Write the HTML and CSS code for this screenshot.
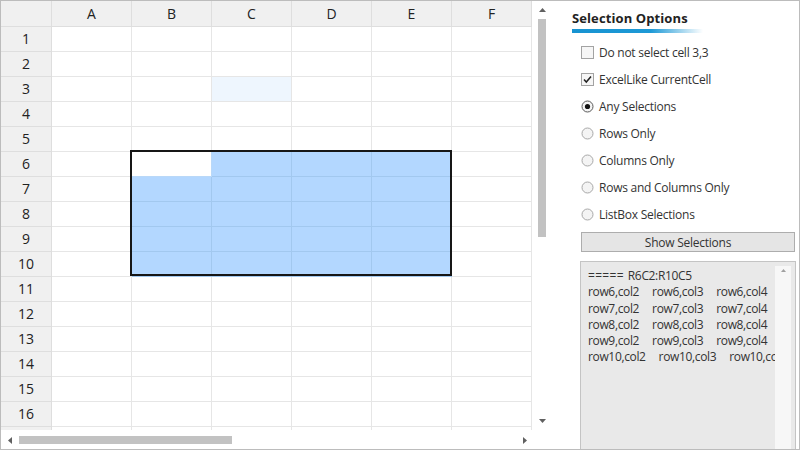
FILE: index.html
```html
<!DOCTYPE html>
<html>
<head>
<meta charset="utf-8">
<link rel="stylesheet" href="styles.css">
</head>
<body>
<div class="window">
  <div class="sheet-area">
    <div class="sheet-row">
      <div class="sheet">
        <div class="grid">
          <div class="h"></div><div class="h">A</div><div class="h">B</div><div class="h">C</div><div class="h">D</div><div class="h">E</div><div class="h">F</div>
          <div class="h">1</div><div class="c"></div><div class="c"></div><div class="c"></div><div class="c"></div><div class="c"></div><div class="c"></div>
          <div class="h">2</div><div class="c"></div><div class="c"></div><div class="c"></div><div class="c"></div><div class="c"></div><div class="c"></div>
          <div class="h">3</div><div class="c"></div><div class="c"></div><div class="c hint"></div><div class="c"></div><div class="c"></div><div class="c"></div>
          <div class="h">4</div><div class="c"></div><div class="c"></div><div class="c"></div><div class="c"></div><div class="c"></div><div class="c"></div>
          <div class="h">5</div><div class="c"></div><div class="c"></div><div class="c"></div><div class="c"></div><div class="c"></div><div class="c"></div>
          <div class="h">6</div><div class="c"></div><div class="c cur"></div><div class="c sel"></div><div class="c sel"></div><div class="c sel"></div><div class="c"></div>
          <div class="h">7</div><div class="c"></div><div class="c sel"></div><div class="c sel"></div><div class="c sel"></div><div class="c sel"></div><div class="c"></div>
          <div class="h">8</div><div class="c"></div><div class="c sel"></div><div class="c sel"></div><div class="c sel"></div><div class="c sel"></div><div class="c"></div>
          <div class="h">9</div><div class="c"></div><div class="c sel"></div><div class="c sel"></div><div class="c sel"></div><div class="c sel"></div><div class="c"></div>
          <div class="h">10</div><div class="c"></div><div class="c sel"></div><div class="c sel"></div><div class="c sel"></div><div class="c sel"></div><div class="c"></div>
          <div class="h">11</div><div class="c"></div><div class="c"></div><div class="c"></div><div class="c"></div><div class="c"></div><div class="c"></div>
          <div class="h">12</div><div class="c"></div><div class="c"></div><div class="c"></div><div class="c"></div><div class="c"></div><div class="c"></div>
          <div class="h">13</div><div class="c"></div><div class="c"></div><div class="c"></div><div class="c"></div><div class="c"></div><div class="c"></div>
          <div class="h">14</div><div class="c"></div><div class="c"></div><div class="c"></div><div class="c"></div><div class="c"></div><div class="c"></div>
          <div class="h">15</div><div class="c"></div><div class="c"></div><div class="c"></div><div class="c"></div><div class="c"></div><div class="c"></div>
          <div class="h">16</div><div class="c"></div><div class="c"></div><div class="c"></div><div class="c"></div><div class="c"></div><div class="c"></div>
          <div class="h"></div><div class="c"></div><div class="c"></div><div class="c"></div><div class="c"></div><div class="c"></div><div class="c"></div>
        </div>
        <div class="sel-box"></div>
      </div>
      <div class="vscroll">
        <div class="arrow-box"><svg width="7" height="4" viewBox="0 0 7 4"><path d="M0 4 L3.5 0 L7 4 Z" fill="#606060"/></svg></div>
        <div class="vthumb"></div>
        <div class="spacer"></div>
        <div class="arrow-box"><svg width="7" height="4" viewBox="0 0 7 4"><path d="M0 0 L3.5 4 L7 0 Z" fill="#606060"/></svg></div>
      </div>
    </div>
    <div class="hscroll-row">
      <div class="hscroll">
        <div class="harrow"><svg width="4" height="7" viewBox="0 0 4 7"><path d="M4 0 L0 3.5 L4 7 Z" fill="#606060"/></svg></div>
        <div class="hthumb"></div>
        <div class="spacer"></div>
        <div class="harrow right"><svg width="4" height="7" viewBox="0 0 4 7"><path d="M0 0 L4 3.5 L0 7 Z" fill="#606060"/></svg></div>
      </div>
      <div class="corner"></div>
    </div>
  </div>

  <div class="panel">
    <div class="title">Selection Options</div>
    <div class="title-bar"></div>
    <div class="options">
      <div class="opt"><span class="check"></span><span>Do not select cell 3,3</span></div>
      <div class="opt"><span class="check"><svg width="11" height="11" viewBox="0 0 11 11"><path d="M2 5.5 L4.3 8 L9 2.5" fill="none" stroke="#222" stroke-width="1.5"/></svg></span><span>ExcelLike CurrentCell</span></div>
      <div class="opt"><svg class="radio" width="13" height="13" viewBox="0 0 13 13"><circle cx="6.5" cy="6.5" r="5.5" fill="#f4f4f4" stroke="#5a5a5a"/><circle cx="6.5" cy="6.5" r="2.6" fill="#111"/></svg><span>Any Selections</span></div>
      <div class="opt"><svg class="radio" width="13" height="13" viewBox="0 0 13 13"><circle cx="6.5" cy="6.5" r="5.5" fill="#f4f4f4" stroke="#a8a8a8"/></svg><span>Rows Only</span></div>
      <div class="opt"><svg class="radio" width="13" height="13" viewBox="0 0 13 13"><circle cx="6.5" cy="6.5" r="5.5" fill="#f4f4f4" stroke="#a8a8a8"/></svg><span>Columns Only</span></div>
      <div class="opt"><svg class="radio" width="13" height="13" viewBox="0 0 13 13"><circle cx="6.5" cy="6.5" r="5.5" fill="#f4f4f4" stroke="#a8a8a8"/></svg><span>Rows and Columns Only</span></div>
      <div class="opt"><svg class="radio" width="13" height="13" viewBox="0 0 13 13"><circle cx="6.5" cy="6.5" r="5.5" fill="#f4f4f4" stroke="#a8a8a8"/></svg><span>ListBox Selections</span></div>
    </div>
    <div class="button">Show Selections</div>
    <div class="listbox">
      <div class="list-content">
        <div class="line"><span class="eq">=====</span> R6C2:R10C5</div>
        <div class="line"><span>row6,col2</span><span>row6,col3</span><span>row6,col4</span></div>
        <div class="line"><span>row7,col2</span><span>row7,col3</span><span>row7,col4</span></div>
        <div class="line"><span>row8,col2</span><span>row8,col3</span><span>row8,col4</span></div>
        <div class="line"><span>row9,col2</span><span>row9,col3</span><span>row9,col4</span></div>
        <div class="line"><span>row10,col2</span><span>row10,col3</span><span>row10,col4</span></div>
      </div>
      <div class="list-scroll">
        <svg width="5" height="3" viewBox="0 0 5 3"><path d="M0 3 L2.5 0 L5 3 Z" fill="#a0a0a0"/></svg>
      </div>
    </div>
  </div>
</div>
</body>
</html>
```
FILE: styles.css
```css
* { box-sizing: border-box; }
html, body { margin: 0; padding: 0; background: #fff; }
body { font-family: "Open Sans", "Noto Sans", sans-serif; color: #333; }

.window {
  width: 800px;
  height: 450px;
  border: 1px solid #bcbcbc;
  display: flex;
  overflow: hidden;
}

.sheet-area {
  width: 548px;
  display: flex;
  flex-direction: column;
}
.sheet-row { height: 429px; display: flex; }
.sheet {
  width: 531px;
  height: 429px;
  overflow: hidden;
  position: relative;
}
.grid {
  display: grid;
  grid-template-columns: 51px repeat(6, 80px);
  grid-template-rows: 26px repeat(17, 25px);
}
.h {
  background: #f0f0f0;
  border-right: 1px solid #dedede;
  border-bottom: 1px solid #dedede;
  font-size: 14px;
  color: #222;
  display: flex;
  align-items: center;
  justify-content: center;
  line-height: 1;
}
.c {
  border-right: 1px solid #e6e6e6;
  border-bottom: 1px solid #e6e6e6;
}
.c.sel { background: #b3d7ff; border-color: #a2c8ef; }
.c.cur { background: #fff; border-color: #b9d8f8; }
.c.hint { background: #eef6fe; }
.sel-box {
  position: absolute;
  left: 129px;
  top: 149px;
  width: 322px;
  height: 126px;
  border: 2px solid #161616;
}

.vscroll {
  width: 17px;
  display: flex;
  flex-direction: column;
  padding-left: 6px;
}
.arrow-box {
  height: 18px;
  width: 8px;
  display: flex;
  align-items: center;
  justify-content: center;
}
.vthumb { width: 8px; height: 218px; background: #c2c2c2; }
.spacer { flex: 1; }

.hscroll-row { height: 19px; display: flex; }
.hscroll {
  width: 531px;
  display: flex;
  align-items: center;
  padding-top: 1px;
}
.harrow {
  width: 18px;
  height: 8px;
  display: flex;
  align-items: center;
  justify-content: center;
}
.harrow.right { width: 14px; }
.hthumb { width: 213px; height: 8px; background: #c2c2c2; }
.corner { flex: 1; }

.panel {
  flex: 1;
  display: flex;
  flex-direction: column;
  padding-left: 23px;
}
.title {
  margin-top: 8px;
  font-size: 13px;
  font-weight: 700;
  line-height: 18px;
  color: #222;
  letter-spacing: 0.1px;
}
.title-bar {
  margin-top: 2px;
  width: 131px;
  height: 4px;
  background: linear-gradient(to right, #1793d1 0%, #1d99d6 60%, #ffffff 100%);
}
.options { margin-top: 6px; padding-left: 9px; }
.opt {
  height: 27px;
  display: flex;
  align-items: center;
  font-size: 12px;
  letter-spacing: -0.25px;
  color: #333;
}
.check {
  width: 13px;
  height: 13px;
  border: 1px solid #a3a3a3;
  background: #f6f6f6;
  margin-right: 5px;
  display: flex;
  align-items: center;
  justify-content: center;
}
.radio { margin-right: 5px; flex: none; }
.button {
  margin: 4px 0 0 9px;
  width: 214px;
  height: 20px;
  background: #e5e5e5;
  border: 1px solid #adadad;
  font-size: 12px;
  letter-spacing: -0.25px;
  color: #333;
  display: flex;
  align-items: center;
  justify-content: center;
}
.listbox {
  margin: 9px 0 0 8px;
  width: 216px;
  flex: 1;
  border: 1px solid #c4c4c4;
  border-bottom: none;
  background: #e9e9e9;
  display: flex;
}
.list-content {
  flex: 1;
  overflow: hidden;
  padding: 6px 0 0 7px;
  font-size: 12px;
  letter-spacing: -0.35px;
  line-height: 16.3px;
  color: #333;
}
.line { display: flex; gap: 13px; white-space: nowrap; }
.line .eq { letter-spacing: 0.3px; margin-right: -9px; }
.list-scroll {
  width: 16px;
  margin: 4px 4px 0 0;
  background: #f7f7f7;
  display: flex;
  justify-content: center;
  padding-top: 3px;
}
.list-scroll svg { display: block; }
```
